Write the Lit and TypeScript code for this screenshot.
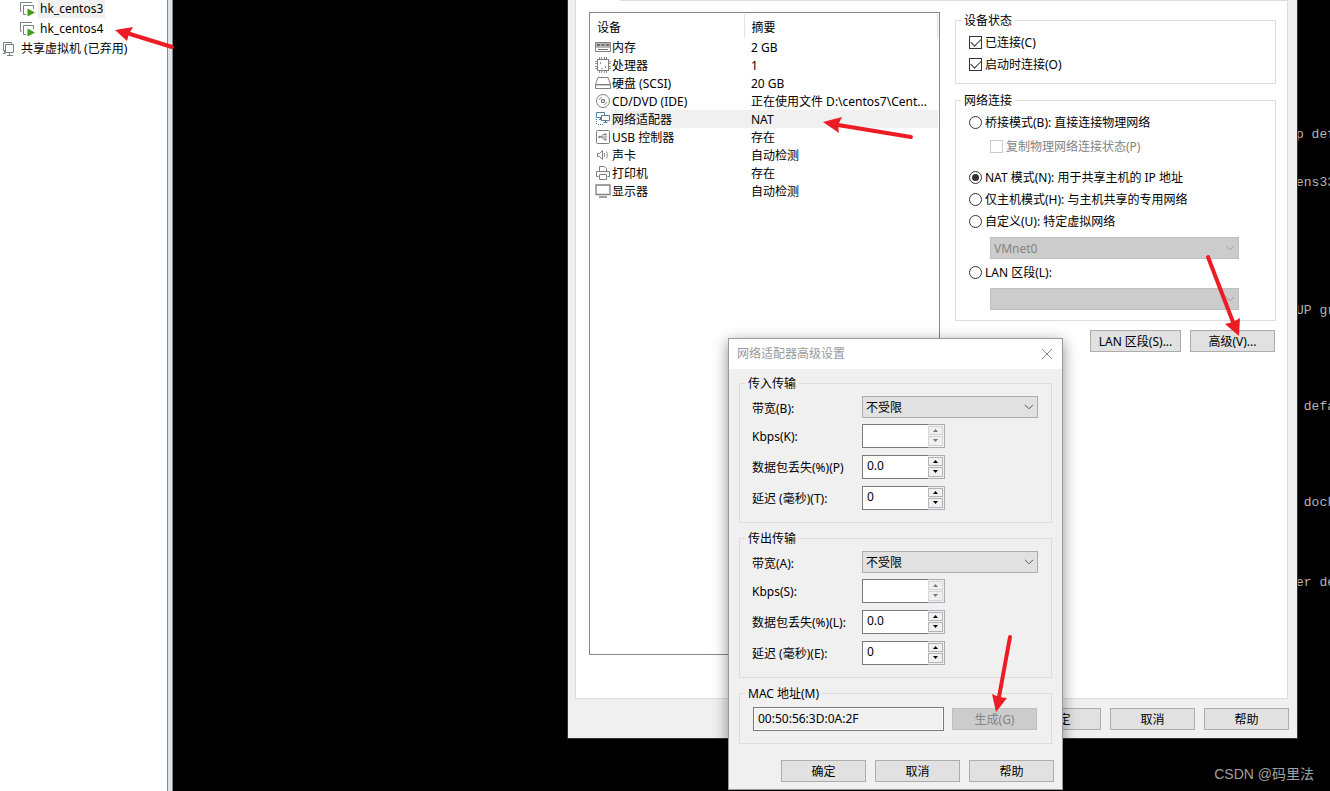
import { LitElement, html, css, svg, TemplateResult } from "lit";
import { customElement } from "lit/decorators.js";
import { classMap } from "lit/directives/class-map.js";

const icons: Record<string, TemplateResult> = {
  memory: svg`<path d="M.5 3.500h15v5h-15zM.5 8.500v4h15v-4" fill="none" stroke="#808080"/><path d="M1 4h14v5H1z" fill="#b5b5b5"/><path d="M2 5h3v2H2zM6.500 5h3v2h-3zM11 5h3v2h-3zM3 10h10v1H3z" fill="#707070"/>`,
  cpu: svg`<rect x="2.500" y="2.500" width="11" height="11" fill="none" stroke="#808080"/><path d="M4.500 0v2M6.500 0v2M9.500 0v2M11.500 0v2M4.500 14v2M6.500 14v2M9.500 14v2M11.500 14v2M0 4.500h2M0 6.500h2M0 9.500h2M0 11.500h2M14 4.500h2M14 6.500h2M14 9.500h2M14 11.500h2" stroke="#909090"/><path d="M5 5h1v2H5zM10 9h1v2h-1zM6 11h2v1H6z" fill="#9a9a9a"/>`,
  disk: svg`<path d="M.5 9.500 3 2.500h10l2.500 7v4H.5zM.5 9.500h15" fill="none" stroke="#808080"/><path d="M1 10h14v1H1z" fill="#c8c8c8"/>`,
  cd: svg`<circle cx="8" cy="8" r="6.500" fill="none" stroke="#808080"/><circle cx="8" cy="8" r="1.600" fill="none" stroke="#808080" stroke-width="1.400"/><path d="M4.200 7A4 4 0 0 1 7 4.200M11.800 9A4 4 0 0 1 9 11.800" fill="none" stroke="#999"/>`,
  network: svg`<path d="M1.500 1.500h8v5h-8zM4 8.500h3M5.500 6.500v2" fill="none" stroke="#557fa5"/><path d="M6.500 4.500h8v5h-8z" fill="#fff" stroke="#557fa5"/><path d="M10.500 9.500v2M8.500 11.500h4" stroke="#557fa5"/><path d="M1.500 8v6M3 13.500h6" stroke="#557fa5" stroke-dasharray="1 1"/>`,
  usb: svg`<rect x="1.500" y="1.500" width="13" height="13" rx="1" fill="none" stroke="#808080"/><path d="M4 8h8M6 8l2-2.500h2M7 8l2 2.500h1" fill="none" stroke="#808080"/><circle cx="4.500" cy="8" r="1.200" fill="#808080"/><path d="M9.500 4.500h2v2h-2zM9.500 9.500h2v2h-2z" fill="#808080"/>`,
  sound: svg`<path d="M2.500 6.500h2l3-3v9l-3-3h-2z" fill="none" stroke="#808080"/><path d="M9.500 6v4M11.500 4.500c1 2 1 5 0 7" fill="none" stroke="#909090"/>`,
  printer: svg`<path d="M4.500 6.500v-5h5l2 2v3M3.500 11.500h-2v-5h13v5h-2M4.500 9.500h7v5h-7z" fill="none" stroke="#808080"/>`,
  display: svg`<path d="M1 2h14v9.500H1z" fill="none" stroke="#808080" stroke-width="1.300"/><path d="M4 14h8" stroke="#808080" stroke-width="1.500"/>`,
  vm: svg`<path d="M1.500 10.500h-1v-9H12M6 13.500H3.500v-9h10V8" fill="none" stroke="#7d8083"/><path d="M7.500 7.500v8L15 11.500z" fill="#3f9c14"/>`,
  shared: svg`<path d="M4 9.500H2.500v-8h8v2M4.500 3.500h8v8h-8zM8.500 11.500v3M6 14.500h6M3.500 10v2M2 12.500h2.500" fill="none" stroke="#7d8083"/>`,
};

const icon = (name: string) =>
  html`<svg class="icon" viewBox="0 0 16 16" width="16" height="16" aria-hidden="true">${icons[name]}</svg>`;

const controlStyles = css`
  :host, * { box-sizing: border-box; }
  button, input, select { font: inherit; color: inherit; margin: 0; }
  .icon { display: block; flex: none; }
  fieldset {
    border: 1px solid #dcdcdc;
    margin: 0;
    padding: 3px 13px 8px;
    min-width: 0;
  }
  legend { padding: 1px 3px 0; margin-left: -8px; line-height: 15px; }
  .btn {
    width: 85px;
    height: 22px;
    padding: 1px 0 0;
    border: 1px solid #adadad;
    border-radius: 0;
    background: #e1e1e1;
    white-space: nowrap;
  }
  .btn.wide { width: 91px; }
  .btn:disabled { background: #ccc; border-color: #bfbfbf; color: #838383; }
  .combo { display: grid; height: 22px; align-items: center; }
  .combo > * { grid-area: 1 / 1; }
  .combo select {
    appearance: none;
    width: 100%;
    height: 22px;
    padding: 1px 3px 0;
    border: 1px solid #adadad;
    border-radius: 0;
    background: #e1e1e1;
  }
  .combo select:disabled {
    background: #ccc;
    border-color: #bfbfbf;
    color: #838383;
    opacity: 1;
  }
  .combo svg { justify-self: end; margin-right: 4px; pointer-events: none; stroke: #555; }
  .combo select:disabled + svg { stroke: #a0a0a0; }
`;

const chevron = html`<svg width="10" height="6" viewBox="0 0 10 6" aria-hidden="true"><path d="M1 .8 5 4.800 9 .8" fill="none"/></svg>`;

const devices = [
  { icon: "memory", name: "内存", summary: "2 GB" },
  { icon: "cpu", name: "处理器", summary: "1" },
  { icon: "disk", name: "硬盘 (SCSI)", summary: "20 GB" },
  { icon: "cd", name: "CD/DVD (IDE)", summary: "正在使用文件 D:\\centos7\\Cent..." },
  { icon: "network", name: "网络适配器", summary: "NAT", selected: true },
  { icon: "usb", name: "USB 控制器", summary: "存在" },
  { icon: "sound", name: "声卡", summary: "自动检测" },
  { icon: "printer", name: "打印机", summary: "存在" },
  { icon: "display", name: "显示器", summary: "自动检测" },
];

@customElement("settings-window")
export class SettingsWindow extends LitElement {
  static styles = [
    controlStyles,
    css`
      :host { display: block; background: #f0f0f0; border: 1px solid #333; border-top: 0; }
      .panel {
        display: flex;
        gap: 15px;
        margin: 0 9px 0 7px;
        padding: 12px 11px 43px 13px;
        border: 1px solid #dcdcdc;
        border-top: 0;
        background: linear-gradient(#dcdcdc, #dcdcdc) 44px 0 / 100% 1px no-repeat #fff;
      }
      .list { flex: 1; min-height: 643px; border: 1px solid #828790; padding: 1px 1px 0 0; }
      table { width: 100%; border-collapse: collapse; table-layout: fixed; }
      th {
        height: 24px;
        padding: 4px 6px 0 7px;
        border-right: 1px solid #e2e2e2;
        font-weight: normal;
        text-align: left;
      }
      .name-col { width: 154px; }
      td { height: 18px; padding: 0; line-height: 16px; white-space: nowrap; }
      .device { display: flex; align-items: center; padding-left: 5px; }
      .device span { flex: 1; padding: 2px 0 0 1px; }
      .summary { padding: 2px 0 0 7px; }
      .selected span, .selected .summary { background: #f0f0f0; }
      .side { width: 321px; }
      .network { margin-top: 8px; }
      .option { display: flex; align-items: center; gap: 3px; height: 22px; }
      .option span { padding-top: 2px; white-space: nowrap; }
      .option input {
        appearance: none;
        display: grid;
        place-items: center;
        flex: none;
        width: 13px;
        height: 13px;
        border: 1px solid #333;
        background: #fff;
      }
      .option input[type="radio"] { border-radius: 50%; }
      .option input[type="radio"]:checked::before {
        content: "";
        width: 7px;
        height: 7px;
        border-radius: 50%;
        background: #333;
      }
      .option input[type="checkbox"]:checked::before {
        content: "";
        width: 9px;
        height: 5px;
        margin-bottom: 3px;
        border: solid #333;
        border-width: 0 0 1px 1px;
        transform: rotate(-45deg);
      }
      .option.sub { margin: 2px 0 9px 21px; color: #838383; }
      .option.sub input { border-color: #ccc; }
      .combo { margin: 5px 23px 2px 21px; }
      .actions { display: flex; justify-content: flex-end; gap: 9px; margin-top: 9px; padding-right: 1px; }
      .footer { display: flex; justify-content: flex-end; gap: 9px; padding: 9px 8px 8px; }
    `,
  ];

  private option(type: string, label: string, checked = false, sub = false) {
    return html`<label class=${classMap({ option: true, sub })}>
      <input type=${type} name="net" .checked=${checked} ?disabled=${sub} /><span>${label}</span>
    </label>`;
  }

  render() {
    return html`
      <div class="panel">
        <div class="list">
          <table>
            <thead>
              <tr><th class="name-col">设备</th><th>摘要</th></tr>
            </thead>
            <tbody>
              ${devices.map(
                (d) => html`<tr class=${d.selected ? "selected" : ""}>
                  <td><div class="device">${icon(d.icon)}<span>${d.name}</span></div></td>
                  <td class="summary">${d.summary}</td>
                </tr>`
              )}
            </tbody>
          </table>
        </div>
        <div class="side">
          <fieldset>
            <legend>设备状态</legend>
            ${this.option("checkbox", "已连接(C)", true)}
            ${this.option("checkbox", "启动时连接(O)", true)}
          </fieldset>
          <fieldset class="network">
            <legend>网络连接</legend>
            ${this.option("radio", "桥接模式(B): 直接连接物理网络")}
            ${this.option("checkbox", "复制物理网络连接状态(P)", false, true)}
            ${this.option("radio", "NAT 模式(N): 用于共享主机的 IP 地址", true)}
            ${this.option("radio", "仅主机模式(H): 与主机共享的专用网络")}
            ${this.option("radio", "自定义(U): 特定虚拟网络")}
            <div class="combo">
              <select disabled aria-label="自定义(U)"><option>VMnet0</option></select>${chevron}
            </div>
            ${this.option("radio", "LAN 区段(L):")}
            <div class="combo">
              <select disabled aria-label="LAN 区段(L)"></select>${chevron}
            </div>
          </fieldset>
          <div class="actions">
            <button class="btn wide">LAN 区段(S)...</button>
            <button class="btn">高级(V)...</button>
          </div>
        </div>
      </div>
      <div class="footer">
        <button class="btn">确定</button>
        <button class="btn">取消</button>
        <button class="btn">帮助</button>
      </div>
    `;
  }
}

interface Transfer {
  id: string;
  title: string;
  bandwidth: string;
  fields: { label: string; value: string; disabled?: boolean }[];
}

const transfers: Transfer[] = [
  {
    id: "in",
    title: "传入传输",
    bandwidth: "带宽(B):",
    fields: [
      { label: "Kbps(K):", value: "", disabled: true },
      { label: "数据包丢失(%)(P)", value: "0.0" },
      { label: "延迟 (毫秒)(T):", value: "0" },
    ],
  },
  {
    id: "out",
    title: "传出传输",
    bandwidth: "带宽(A):",
    fields: [
      { label: "Kbps(S):", value: "", disabled: true },
      { label: "数据包丢失(%)(L):", value: "0.0" },
      { label: "延迟 (毫秒)(E):", value: "0" },
    ],
  },
];

@customElement("advanced-window")
export class AdvancedWindow extends LitElement {
  static styles = [
    controlStyles,
    css`
      :host {
        display: block;
        background: #f0f0f0;
        border: 1px solid #999;
        box-shadow: 0 4px 14px rgba(0, 0, 0, 0.45);
      }
      header {
        display: flex;
        align-items: center;
        justify-content: space-between;
        height: 30px;
        padding: 0 9px 0 8px;
        background: #fff;
        color: #999;
      }
      .close { display: flex; padding: 0; border: 0; background: none; }
      .body { display: grid; gap: 7px; padding: 6px 10px 0; }
      fieldset { padding: 3px 13px 9px 12px; }
      legend { margin-left: -7px; }
      .fields {
        display: grid;
        grid-template-columns: 110px 1fr;
        grid-template-rows: 26px repeat(3, 31px);
        align-items: center;
      }
      .fields label { padding-top: 3px; white-space: nowrap; }
      .spin { display: flex; width: 83px; height: 24px; }
      .spin input {
        width: 66px;
        padding: 0 4px 2px;
        border: 1px solid #7a7a7a;
        border-right: 0;
        background: #fff;
      }
      .arrows {
        display: grid;
        gap: 1px;
        width: 17px;
        padding: 1px 1px 1px 0;
        border: 1px solid #abadb3;
        border-left: 0;
      }
      .arrows button {
        display: grid;
        place-items: center;
        min-height: 0;
        padding: 0;
        border: 1px solid #b4b4b4;
        background: #f0f0f0;
      }
      .arrows button:disabled { border-color: #d5d5d5; }
      .arrows button:disabled svg { fill: #777; }
      .mac { display: flex; justify-content: space-between; align-items: center; padding: 3px 1px; }
      .mac input {
        width: 191px;
        height: 24px;
        padding: 0 4px 2px;
        border: 1px solid #7a7a7a;
        box-shadow: inset 0 0 0 1px #fff;
        background: #f0f0f0;
      }
      .footer { display: flex; justify-content: flex-end; gap: 9px; padding: 16px 8px 7px; }
    `,
  ];

  private arrow(up: boolean, disabled: boolean) {
    return html`<button ?disabled=${disabled} aria-label=${up ? "增加" : "减少"}>
      <svg width="5" height="3" viewBox="0 0 5 3"><path d=${up ? "M0 3 2.500 0 5 3z" : "M0 0h5L2.500 3z"} /></svg>
    </button>`;
  }

  render() {
    return html`
      <header>
        <span>网络适配器高级设置</span>
        <button class="close" aria-label="关闭">
          <svg width="12" height="12" viewBox="0 0 12 12"><path d="m1 1 10 10M11 1 1 11" fill="none" stroke="#888" /></svg>
        </button>
      </header>
      <div class="body">
        ${transfers.map(
          (t) => html`<fieldset>
            <legend>${t.title}</legend>
            <div class="fields">
              <label for=${t.id}>${t.bandwidth}</label>
              <div class="combo"><select id=${t.id}><option>不受限</option></select>${chevron}</div>
              ${t.fields.map(
                (f, i) => html`<label for=${t.id + i}>${f.label}</label>
                  <div class="spin">
                    <input id=${t.id + i} .value=${f.value} ?disabled=${!!f.disabled} />
                    <div class="arrows">${this.arrow(true, !!f.disabled)}${this.arrow(false, !!f.disabled)}</div>
                  </div>`
              )}
            </div>
          </fieldset>`
        )}
        <fieldset>
          <legend><label for="mac">MAC 地址(M)</label></legend>
          <div class="mac">
            <input id="mac" readonly .value=${"00:50:56:3D:0A:2F"} />
            <button class="btn" disabled>生成(G)</button>
          </div>
        </fieldset>
      </div>
      <div class="footer">
        <button class="btn">确定</button>
        <button class="btn">取消</button>
        <button class="btn">帮助</button>
      </div>
    `;
  }
}

const machines = [
  { icon: "vm", name: "hk_centos3", selected: true },
  { icon: "vm", name: "hk_centos4" },
  { icon: "shared", name: "共享虚拟机 (已弃用)", root: true },
];

/* Terminal rows that stay visible beside the settings window. */
const terminal: Record<number, string> = {
  7: "p def",
  10: "ens33",
  18: "UP gr",
  24: " defa",
  30: " dock",
  35: "er de",
};
const terminalText = Array.from({ length: 36 }, (_, i) => terminal[i] ?? "").join("\n");

const arrows = [
  { from: [172, 47], to: [130, 34], head: "115,30 133,27 129,34 127,41" },
  { from: [911, 137], to: [838, 125], head: "823,122 842,117 838,125 839,133" },
  { from: [1208, 257], to: [1233, 322], head: "1239,336 1225,324 1233,322 1240,318" },
  { from: [1010, 637], to: [999, 697], head: "996,712 992,694 999,697 1007,698" },
];

@customElement("app-root")
export class AppRoot extends LitElement {
  static styles = css`
    :host, * { box-sizing: border-box; }
    :host {
      position: relative;
      display: flex;
      min-height: 100vh;
      overflow: hidden;
      background: #000;
      color: #000;
      font: 12px/16px "Noto Sans", "Noto Sans CJK SC", sans-serif;
    }
    nav { width: 167px; background: #fff; }
    ul { margin: -1px 0 0; padding: 0; list-style: none; }
    li { display: flex; align-items: center; gap: 2px; height: 20px; padding-left: 20px; }
    li.root { gap: 4px; padding-left: 1px; }
    li a { padding: 1px 2px; color: inherit; text-decoration: none; white-space: nowrap; }
    li.root a { padding: 0; }
    li.selected a { background: #f0f0f0; }
    .splitter { width: 6px; border: solid #828790; border-width: 0 1px; background: #dfe3e8; }
    .console { display: flex; flex: 1; justify-content: flex-end; overflow: hidden; }
    pre {
      width: 34px;
      margin: 0;
      padding-top: 15px;
      color: #b4b4b4;
      font: 13px/16px "Liberation Mono", monospace;
    }
    .settings { position: absolute; top: 0; left: 567px; width: 731px; }
    .advanced { position: absolute; top: 338px; left: 728px; width: 335px; }
    .marks { position: absolute; top: 0; left: 0; overflow: visible; pointer-events: none; }
    .mark { stroke: #ed1c24; stroke-width: 4; stroke-linecap: round; }
    .head { fill: #ed1c24; }
    .watermark {
      position: absolute;
      right: 16px;
      bottom: 7px;
      color: #a0a0a0;
      font: 14px/20px "Liberation Sans", "Noto Sans CJK SC", sans-serif;
    }
    .icon { display: block; flex: none; }
  `;

  render() {
    return html`
      <nav>
        <ul>
          ${machines.map(
            (m) => html`<li class=${classMap({ selected: !!m.selected, root: !!m.root })}>
              ${icon(m.icon)}<a href="#">${m.name}</a>
            </li>`
          )}
        </ul>
      </nav>
      <div class="splitter"></div>
      <main class="console"><pre>${terminalText}</pre></main>
      <settings-window class="settings"></settings-window>
      <advanced-window class="advanced"></advanced-window>
      <svg class="marks" width="1" height="1" aria-hidden="true">
        ${arrows.map(
          (a) => svg`<line class="mark" x1=${a.from[0]} y1=${a.from[1]} x2=${a.to[0]} y2=${a.to[1]}></line>
            <polygon class="head" points=${a.head}></polygon>`
        )}
      </svg>
      <div class="watermark">CSDN @码里法</div>
    `;
  }
}
